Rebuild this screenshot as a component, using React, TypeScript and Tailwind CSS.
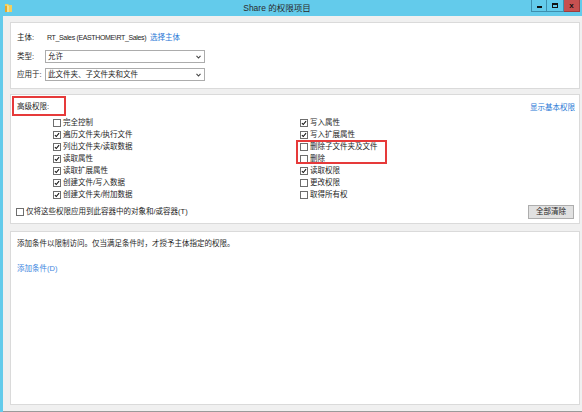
import React from "react";

const FONT = "font-['Liberation_Sans','Noto_Sans_CJK_SC',sans-serif]";

function Check({ checked }: { checked?: boolean }) {
  return (
    <span className="w-[8px] h-[8px] border border-[#6e6e6e] bg-white flex items-center justify-center shrink-0">
      {checked && (
        <svg width="8" height="8" viewBox="0 0 8 8">
          <path d="M1.2 4.2 L3 6 L6.8 1.6" fill="none" stroke="#111" strokeWidth="1.4" />
        </svg>
      )}
    </span>
  );
}

function Row({ label, checked }: { label: string; checked?: boolean }) {
  return (
    <div className="h-[12px] flex items-center gap-[2px]">
      <Check checked={checked} />
      <span>{label}</span>
    </div>
  );
}

function Select({ value }: { value: string }) {
  return (
    <div className="w-[160px] h-[13px] border border-[#acacac] bg-white flex items-center justify-between pl-[2px] pr-[3px]">
      <span>{value}</span>
      <svg width="5" height="4" viewBox="0 0 5 4">
        <path d="M0.5 0.8 L2.5 3 L4.5 0.8" fill="none" stroke="#444" strokeWidth="1.1" />
      </svg>
    </div>
  );
}

const left = [
  { label: "完全控制", checked: false },
  { label: "遍历文件夹/执行文件", checked: true },
  { label: "列出文件夹/读取数据", checked: true },
  { label: "读取属性", checked: true },
  { label: "读取扩展属性", checked: true },
  { label: "创建文件/写入数据", checked: true },
  { label: "创建文件夹/附加数据", checked: true },
];

const right = [
  { label: "写入属性", checked: true },
  { label: "写入扩展属性", checked: true },
  { label: "删除子文件夹及文件", checked: false },
  { label: "删除", checked: false },
  { label: "读取权限", checked: true },
  { label: "更改权限", checked: false },
  { label: "取得所有权", checked: false },
];

export default function App() {
  return (
    <div className={`w-[582px] h-[412px] bg-[#63cbeb] flex flex-col overflow-hidden text-[7.5px] leading-none text-[#1e1e1e] ${FONT}`}>
      {/* TITLE BAR */}
      <div className="h-[16px] shrink-0 flex items-start relative">
        <svg className="ml-[4px] mt-[3px]" width="9" height="10" viewBox="0 0 9 10">
          <path d="M1 1 H4 L5 2 H8 V9 H1 Z" fill="#f3cf5d" />
          <path d="M1 3 H3 V9 H1 Z" fill="#e2a92e" />
          <path d="M3 2 L5 3 V9 L3 9 Z" fill="#f8e08e" />
        </svg>
        <div className="flex-1 flex justify-center pl-[10px] pt-[4px] text-[8.5px] text-[#2a2a2a]">
          Share 的权限项目
        </div>
        <div className="flex h-[12px] mr-[2px]">
          <div className="w-[16px] h-full border border-t-0 border-[#3e8fae] flex items-end justify-center pb-[3px]">
            <span className="w-[5px] h-[2px] bg-[#111]" />
          </div>
          <div className="w-[17px] h-full border-b border-r border-[#3e8fae] flex items-center justify-center">
            <span className="w-[6px] h-[5px] border border-t-2 border-[#111]" />
          </div>
          <div className="w-[16px] h-full bg-[#c75050] border-b border-r border-[#9e3c3c] flex items-center justify-center text-[8px] font-bold text-[#111]">
            x
          </div>
        </div>
      </div>

      {/* BODY */}
      <div className="flex-1 ml-[3px] bg-[#f0f0f0] pl-[7px] pr-[2px] pt-[6px] pb-[6px] flex flex-col border-b border-[#9a9a9a]">
        {/* PRINCIPAL */}
        <div className="bg-white border border-[#dadada] px-[6px] pt-[8px] pb-[7px] flex flex-col">
          <div className="h-[13px] flex items-center">
            <span className="w-[30px] shrink-0">主体:</span>
            <span className="w-[103px] shrink-0 whitespace-nowrap text-[7px] tracking-[-0.35px]">RT_Sales (EASTHOME\RT_Sales)</span>
            <span className="text-[#2a78d6]">选择主体</span>
          </div>
          <div className="h-[13px] mt-[6px] flex items-center">
            <span className="w-[28px]">类型:</span>
            <Select value="允许" />
          </div>
          <div className="h-[13px] mt-[5px] flex items-center">
            <span className="w-[28px]">应用于:</span>
            <Select value="此文件夹、子文件夹和文件" />
          </div>
        </div>

        {/* ADVANCED PERMISSIONS */}
        <div className="mt-[5px] bg-white border border-[#dadada] flex flex-col pb-[4px]">
          <div className="h-[22px] relative flex items-center justify-between pl-[6px] pr-[4px]">
            <span className="mt-[1px]">高级权限:</span>
            <span className="text-[#2a78d6] mt-[3px]">显示基本权限</span>
            <div className="absolute left-[1px] top-[1px] w-[54px] h-[20px] border-2 border-[#e63a3a]" />
          </div>
          <div className="grid grid-cols-[247px_1fr] pl-[42px]">
            <div className="flex flex-col">
              {left.map((r) => (
                <Row key={r.label} label={r.label} checked={r.checked} />
              ))}
            </div>
            <div className="flex flex-col relative">
              {right.map((r) => (
                <Row key={r.label} label={r.label} checked={r.checked} />
              ))}
              <div className="absolute left-[-4px] top-[23px] w-[91px] h-[24px] border-2 border-[#e63a3a]" />
            </div>
          </div>
          <div className="mt-[4px] h-[14px] flex items-center justify-between pl-[5px] pr-[5px]">
            <div className="flex items-center gap-[2px]">
              <Check />
              <span>仅将这些权限应用到此容器中的对象和/或容器(T)</span>
            </div>
            <button className="w-[46px] h-[14px] bg-[#e1e1e1] border border-[#adadad] flex items-center justify-center">
              全部清除
            </button>
          </div>
        </div>

        {/* CONDITIONS */}
        <div className="mt-[7px] flex-1 bg-white border border-[#dadada] flex flex-col px-[6px]">
          <div className="mt-[6px] h-[12px] flex items-center">
            添加条件以限制访问。仅当满足条件时，才授予主体指定的权限。
          </div>
          <div className="mt-[13px] h-[12px] flex items-center text-[#3d86e0]">添加条件(D)</div>
        </div>
      </div>
    </div>
  );
}
